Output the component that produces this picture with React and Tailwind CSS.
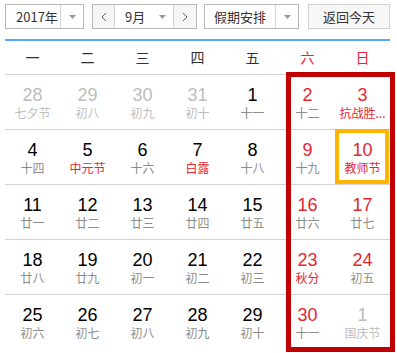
import React from "react";

const CJK = { fontFamily: '"Noto Sans CJK SC", "Liberation Sans", sans-serif' };
const NUM = { fontFamily: '"Liberation Sans", Arial, sans-serif' };

const Tri = () => (
  <svg width="7" height="4" viewBox="0 0 7 4">
    <polygon points="0,0 7,0 3.5,4" fill="#9a9a9a" />
  </svg>
);

const Chev = ({ dir }) => (
  <svg width="6" height="10" viewBox="0 0 6 10">
    <polyline
      points={dir === "l" ? "5,1 1,5 5,9" : "1,1 5,5 1,9"}
      fill="none"
      stroke="#666"
      strokeWidth="1"
    />
  </svg>
);

// n: number, l: lunar, t: type: 'o' other month, 'w' weekend, f: festival red
const rows = [
  [
    { n: 28, l: "七夕节", o: 1 },
    { n: 29, l: "初八", o: 1 },
    { n: 30, l: "初九", o: 1 },
    { n: 31, l: "初十", o: 1 },
    { n: 1, l: "十一" },
    { n: 2, l: "十二", w: 1 },
    { n: 3, l: "抗战胜...", w: 1, f: 1 },
  ],
  [
    { n: 4, l: "十四" },
    { n: 5, l: "中元节", f: 1 },
    { n: 6, l: "十六" },
    { n: 7, l: "白露", f: 1 },
    { n: 8, l: "十八" },
    { n: 9, l: "十九", w: 1 },
    { n: 10, l: "教师节", w: 1, f: 1, sel: 1 },
  ],
  [
    { n: 11, l: "廿一" },
    { n: 12, l: "廿二" },
    { n: 13, l: "廿三" },
    { n: 14, l: "廿四" },
    { n: 15, l: "廿五" },
    { n: 16, l: "廿六", w: 1 },
    { n: 17, l: "廿七", w: 1 },
  ],
  [
    { n: 18, l: "廿八" },
    { n: 19, l: "廿九" },
    { n: 20, l: "初一" },
    { n: 21, l: "初二" },
    { n: 22, l: "初三" },
    { n: 23, l: "秋分", w: 1, f: 1 },
    { n: 24, l: "初五", w: 1 },
  ],
  [
    { n: 25, l: "初六" },
    { n: 26, l: "初七" },
    { n: 27, l: "初八" },
    { n: 28, l: "初九" },
    { n: 29, l: "初十" },
    { n: 30, l: "十一", w: 1 },
    { n: 1, l: "国庆节", o: 1 },
  ],
];

function Cell({ c }) {
  const numColor = c.o ? "text-[#bdbdbd]" : c.w ? "text-[#e5262f]" : "text-black";
  const lunColor = c.o ? "text-[#bdbdbd]" : c.f ? "text-[#e5262f]" : "text-[#8c8c8c]";
  return (
    <div className="relative flex flex-col items-center pt-[10px]">
      {c.sel ? (
        <div className="absolute left-0 right-[1px] top-[-1px] bottom-0 border-[4px] border-[#ffb400]" />
      ) : null}
      <div className={`text-[18px] leading-[20px] ${numColor}`} style={NUM}>
        {c.n}
      </div>
      <div className={`text-[12px] leading-[16px] whitespace-nowrap ${lunColor}`} style={CJK}>
        {c.l}
      </div>
    </div>
  );
}

export default function App() {
  const week = ["一", "二", "三", "四", "五", "六", "日"];
  return (
    <div className="relative w-[397px] h-[353px] bg-white overflow-hidden" style={CJK}>
      <div className="flex items-start pt-[4px] pl-[5px] text-[13px] text-[#333]">
        <div className="flex h-[25px] w-[79px] border border-[#b8b8b8]">
          <div className="w-[54px] flex items-center pl-[10px]">2017年</div>
          <div className="flex-1 flex items-center justify-center border-l border-[#d6d6d6]">
            <Tri />
          </div>
        </div>
        <div className="ml-[8px] flex h-[25px] w-[105px] border border-[#b8b8b8]">
          <div className="w-[21px] flex items-center justify-center bg-[#f6f6f6]">
            <Chev dir="l" />
          </div>
          <div className="w-[60px] flex items-center border-l border-r border-[#d6d6d6] pl-[10px]">
            <span className="w-[34px]">9月</span>
            <Tri />
          </div>
          <div className="flex-1 flex items-center justify-center bg-[#f6f6f6]">
            <Chev dir="r" />
          </div>
        </div>
        <div className="ml-[7px] flex h-[25px] w-[95px] border border-[#b8b8b8]">
          <div className="w-[70px] flex items-center justify-center">假期安排</div>
          <div className="flex-1 flex items-center justify-center border-l border-[#d6d6d6]">
            <Tri />
          </div>
        </div>
        <div className="ml-[9px] flex h-[25px] w-[82px] items-center justify-center border border-[#d0d0d0] bg-[#f7f7f7]">
          返回今天
        </div>
      </div>
      <div className="ml-[5px] mt-[10px] h-[2px] w-[385px] bg-[#5aa7f5]" />
      <div className="ml-[5px] w-[385px]">
        <div className="grid grid-cols-7 h-[34px] border-b border-[#d3d3d3] text-[14px]">
          {week.map((w, i) => (
            <div
              key={w}
              className={`flex items-center justify-center ${i >= 5 ? "text-[#e5262f]" : "text-[#333]"}`}
            >
              {w}
            </div>
          ))}
        </div>
        {rows.map((r, i) => (
          <div
            key={i}
            className={`grid grid-cols-7 box-border ${i === 0 ? "h-[54px]" : "h-[55px] border-t border-[#d3d3d3]"}`}
          >
            {r.map((c, j) => (
              <Cell key={j} c={c} />
            ))}
          </div>
        ))}
      </div>
      <div className="absolute left-[286px] top-[72px] w-[109px] h-[280px] border-[5px] border-[#c00000]" />
    </div>
  );
}
